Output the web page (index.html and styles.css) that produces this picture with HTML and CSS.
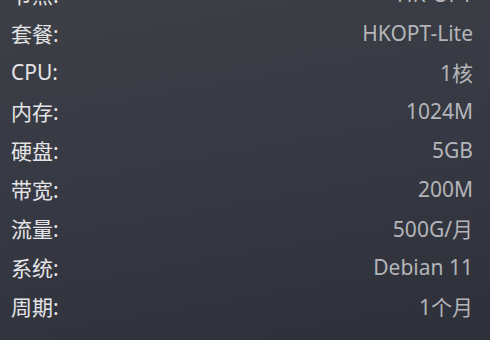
FILE: index.html
```html
<!DOCTYPE html>
<html lang="zh-CN">
<head>
  <meta charset="UTF-8" />
  <title>套餐详情</title>
  <meta name="viewport" content="width=device-width, initial-scale=1" />
  <link rel="stylesheet" href="styles.css">
</head>
<body>
  <div class="plan-card">
    <ul class="spec-list">
      <li><span class="spec-label">节点:</span><span class="spec-value">HK-OPT</span></li>
      <li><span class="spec-label">套餐:</span><span class="spec-value">HKOPT-Lite</span></li>
      <li><span class="spec-label">CPU:</span><span class="spec-value">1核</span></li>
      <li><span class="spec-label">内存:</span><span class="spec-value">1024M</span></li>
      <li><span class="spec-label">硬盘:</span><span class="spec-value">5GB</span></li>
      <li><span class="spec-label">带宽:</span><span class="spec-value">200M</span></li>
      <li><span class="spec-label">流量:</span><span class="spec-value">500G/月</span></li>
      <li><span class="spec-label">系统:</span><span class="spec-value">Debian 11</span></li>
      <li><span class="spec-label">周期:</span><span class="spec-value">1个月</span></li>
    </ul>
  </div>
</body>
</html>
```

FILE: styles.css
```css
html, body {
  height: 100%;
}

body {
  margin: 0;
  font-family: "Noto Sans", "Noto Sans CJK SC", sans-serif;
  background: linear-gradient(170deg, #3d3f46 0%, #363943 50%, #2e3039 100%);
  overflow: hidden;
}

.plan-card {
  padding: 0 17px 0 11px;
}

.spec-list {
  list-style: none;
  margin: -26px 0 0;
  padding: 0;
}

.spec-list li {
  display: flex;
  justify-content: space-between;
  align-items: center;
  height: 39px;
  font-size: 21px;
}

.spec-label {
  color: #e4e4e6;
}

.spec-value {
  color: #b4b5b9;
}
```
